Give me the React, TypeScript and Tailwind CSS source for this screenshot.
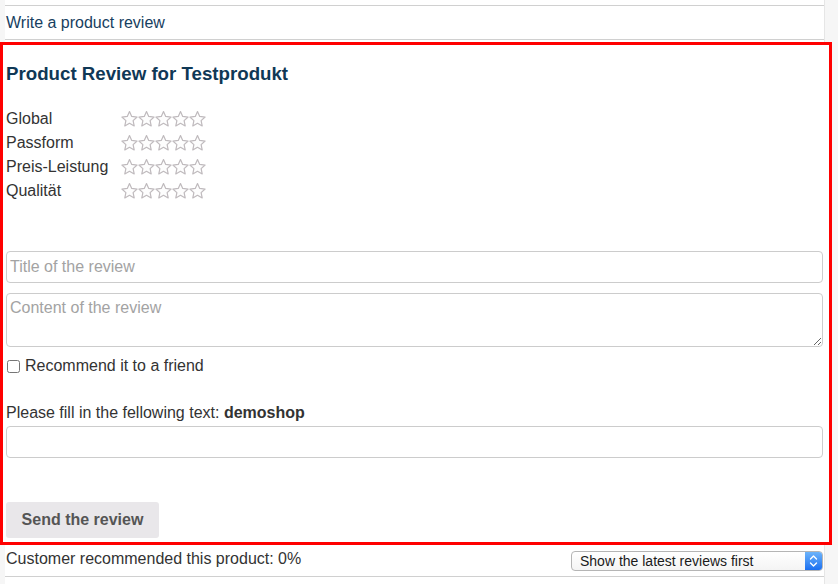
import React from "react";

function Star() {
  return (
    <svg width="17" height="16" viewBox="0 0 17 16" className="block">
      <polygon
        points="8.5,0.6 10.73,5.43 16.1,6.03 12.11,9.67 13.2,14.97 8.5,12.3 3.8,14.97 4.89,9.67 0.9,6.03 6.27,5.43"
        fill="#fdfdfd"
        stroke="#bfbabd"
        strokeWidth="1.2"
        strokeLinejoin="round"
      />
    </svg>
  );
}

function Stars() {
  return (
    <div className="flex items-center">
      <Star />
      <Star />
      <Star />
      <Star />
      <Star />
    </div>
  );
}

const ratings = ["Global", "Passform", "Preis-Leistung", "Qualität"];

export default function App() {
  return (
    <div
      className="flex w-[838px] h-[584px] overflow-hidden bg-white text-[#333333] text-[16px]"
      style={{ fontFamily: '"Liberation Sans", Arial, Helvetica, sans-serif' }}
    >
      <div className="w-[5px] shrink-0 bg-[#f6f6f6]" />
      <div className="w-[819px] shrink-0 bg-white">
        <div className="pt-[5px]">
          <div className="border-y border-[#d0d0d0] leading-[33px] pl-px text-[#17405f]">
            Write a product review
          </div>
        </div>

        <section className="relative z-10 mt-[2px] ml-[-5px] w-[832px] border-[3px] border-[#ff0000] bg-white pl-[3px] pr-[6px] pt-[18px] pb-[4px]">
          <h2 className="text-[18.7px] font-bold leading-[22px] text-[#0f3856]">
            Product Review for Testprodukt
          </h2>

          <div className="mt-[22px]">
            {ratings.map((r) => (
              <div key={r} className="flex items-center h-[24px]">
                <div className="w-[115px] leading-[24px]">{r}</div>
                <Stars />
              </div>
            ))}
          </div>

          <input
            type="text"
            placeholder="Title of the review"
            className="mt-[48px] block w-[817px] h-[32px] rounded-[4px] border border-[#cccccc] bg-white px-[3px] text-[16px] outline-none placeholder:text-[#a3a3a3]"
          />
          <textarea
            placeholder="Content of the review"
            className="mt-[10px] block w-[817px] h-[54px] rounded-[4px] border border-[#cccccc] bg-white px-[3px] pt-[4px] text-[16px] leading-[20px] outline-none placeholder:text-[#a3a3a3]"
          />

          <label className="mt-[7px] flex items-center h-[24px] leading-[24px]">
            <input type="checkbox" className="ml-px mr-[5px] w-[13px] h-[13px] m-0" />
            <span>Recommend it to a friend</span>
          </label>

          <div className="mt-[23px] leading-[24px]">
            Please fill in the fellowing text: <b>demoshop</b>
          </div>
          <input
            type="text"
            className="mt-px block w-[817px] h-[32px] rounded-[4px] border border-[#cccccc] bg-white px-[3px] text-[16px] outline-none"
          />

          <button className="mt-[44px] block w-[153px] h-[36px] rounded-[3px] bg-[#e9e7ea] text-[16px] font-bold text-[#555555]">
            Send the review
          </button>
        </section>

        <div className="flex items-center justify-between h-[32px] border-b border-[#d0d0d0] pl-px pr-px">
          <span className="-mt-[3px]">Customer recommended this product: 0%</span>
          <div className="flex h-[20px] w-[252px] rounded-[4px] border border-[#b5b5b5] bg-gradient-to-b from-white to-[#f4f4f4] overflow-hidden">
            <div className="flex-1 pl-[8px] text-[14px] leading-[18px] text-[#1a1a1a]">
              Show the latest reviews first
            </div>
            <div className="w-[17px] flex items-center justify-center bg-gradient-to-b from-[#6cb3fa] to-[#1a6ff0]">
              <svg width="9" height="14" viewBox="0 0 9 14">
                <path d="M1.5 5 L4.5 2 L7.5 5" fill="none" stroke="#ffffff" strokeWidth="1.4" strokeLinecap="round" strokeLinejoin="round" />
                <path d="M1.5 9 L4.5 12 L7.5 9" fill="none" stroke="#ffffff" strokeWidth="1.4" strokeLinecap="round" strokeLinejoin="round" />
              </svg>
            </div>
          </div>
        </div>
      </div>
      <div className="flex-1 border-l border-[#e6e6e6] bg-[#f6f6f6]" />
    </div>
  );
}
